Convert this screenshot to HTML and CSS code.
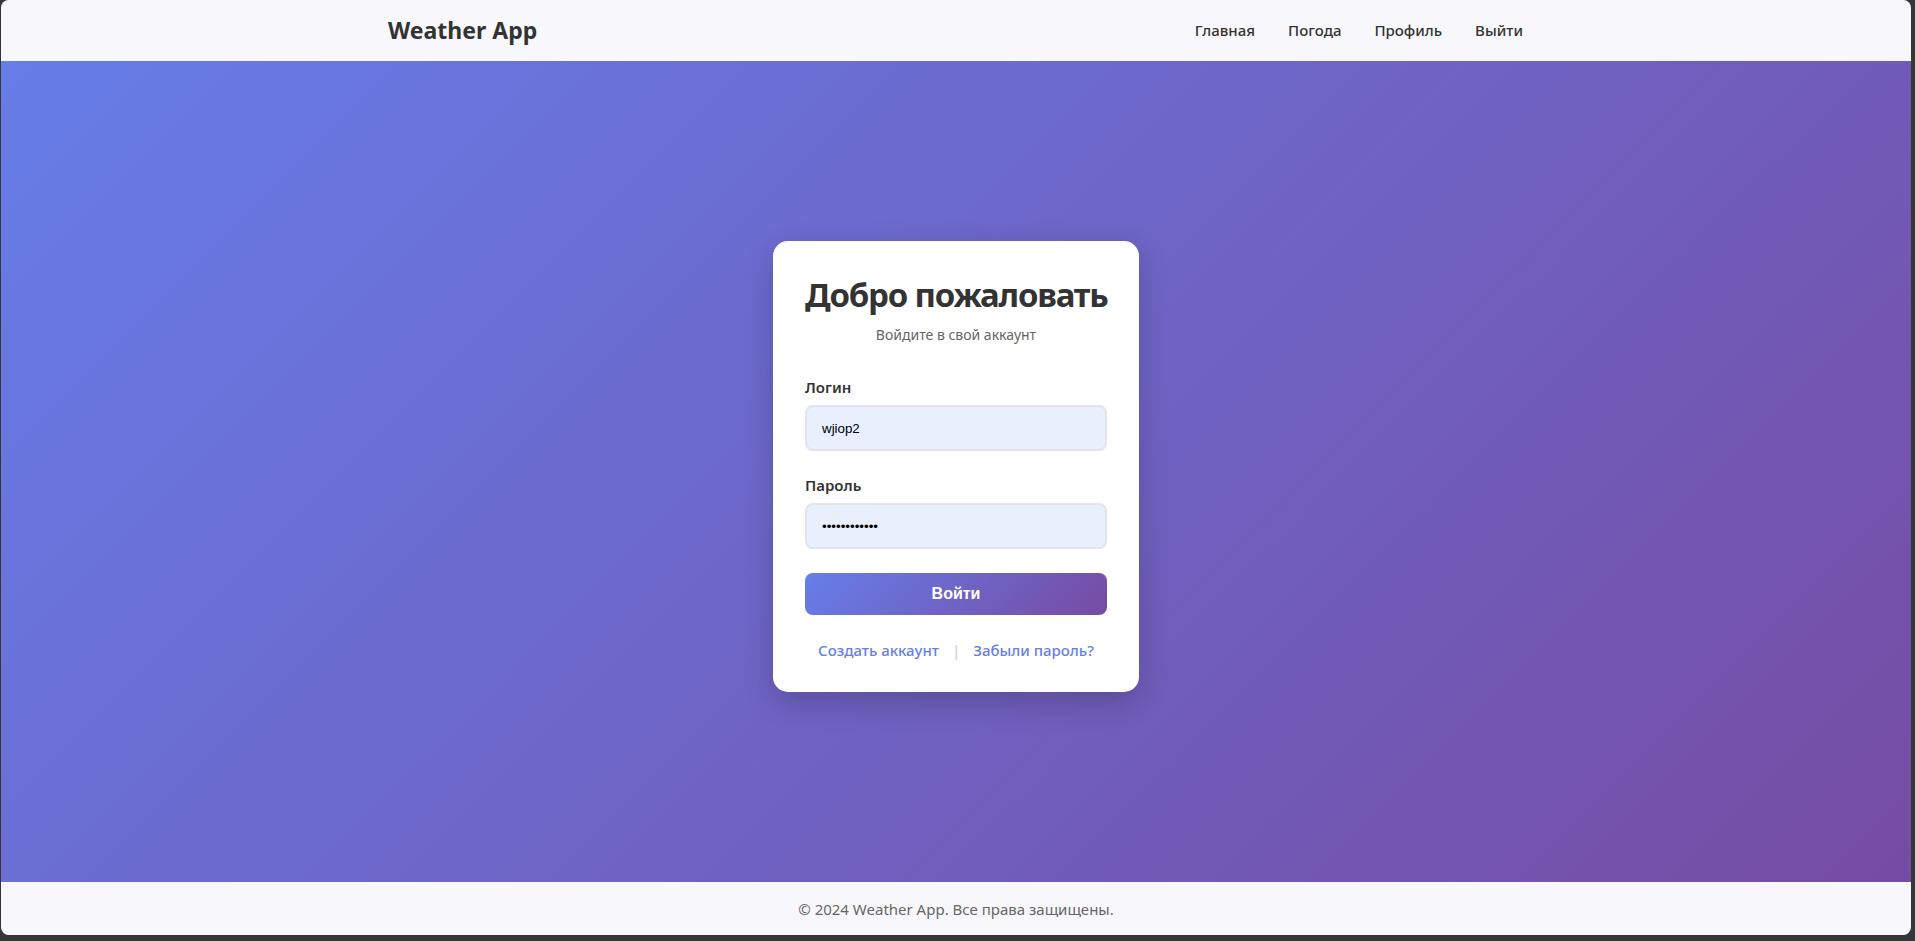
FILE: index.html
```html
<!DOCTYPE html>
<html lang="ru">
<head>
<meta charset="utf-8">
<title>Weather App — Вход</title>
<link rel="stylesheet" href="styles.css">
</head>
<body>
<div class="window">
  <header class="site-header">
    <div class="container header-inner">
      <a class="logo" href="#">Weather App</a>
      <nav class="nav">
        <a href="#">Главная</a>
        <a href="#">Погода</a>
        <a href="#">Профиль</a>
        <a href="#">Выйти</a>
      </nav>
    </div>
  </header>
  <main class="main">
    <div class="card">
      <h1 class="card-title">Добро пожаловать</h1>
      <p class="card-subtitle">Войдите в свой аккаунт</p>
      <form class="form">
        <div class="form-group">
          <label class="form-label" for="login">Логин</label>
          <input class="form-input" id="login" type="text" value="wjiop2">
        </div>
        <div class="form-group">
          <label class="form-label" for="password">Пароль</label>
          <input class="form-input" id="password" type="password" value="abcdefghijkl">
        </div>
        <button class="btn" type="button">Войти</button>
      </form>
      <div class="links">
        <a href="#">Создать аккаунт</a>
        <span class="sep">|</span>
        <a href="#">Забыли пароль?</a>
      </div>
    </div>
  </main>
  <footer class="site-footer">
    <p>© 2024 Weather App. Все права защищены.</p>
  </footer>
</div>
</body>
</html>
```

FILE: styles.css
```css
* { box-sizing: border-box; }

html, body {
  margin: 0;
  padding: 0;
  height: 100%;
}

body {
  background: #363636;
  font-family: "Noto Sans", "Open Sans", sans-serif;
  color: #333;
}

.window {
  height: 935px;
  margin: 0 4px 0 1px;
  border-radius: 8px;
  overflow: hidden;
  display: flex;
  flex-direction: column;
  background: linear-gradient(135deg, #667eea 0%, #764ba2 100%);
}

.site-header {
  height: 61px;
  flex: 0 0 61px;
  background: #f8f8fc;
  display: flex;
  align-items: center;
  padding-bottom: 2px;
}

.container {
  width: 100%;
  max-width: 1200px;
  margin: 0 auto;
  padding: 0 32px;
}

.header-inner {
  display: flex;
  align-items: center;
  justify-content: space-between;
}

.logo {
  font-size: 23px;
  font-weight: 700;
  color: #333;
  text-decoration: none;
  line-height: 30px;
}

.nav {
  display: flex;
  gap: 33px;
  padding-right: 1px;
}

.nav a {
  font-size: 15px;
  font-weight: 500;
  color: #333;
  text-decoration: none;
  line-height: 20px;
}

.main {
  flex: 1;
  display: flex;
  align-items: center;
  justify-content: center;
  padding-bottom: 10px;
}

.card {
  width: 366px;
  background: #fff;
  border-radius: 15px;
  padding: 32px;
  box-shadow: 0 10px 30px rgba(0, 0, 0, 0.2);
}

.card-title {
  margin: 0;
  font-size: 33px;
  letter-spacing: -1.2px;
  line-height: 44px;
  font-weight: 700;
  color: #333;
  text-align: center;
  white-space: nowrap;
}

.card-subtitle {
  margin: 8px 0 0;
  font-size: 14px;
  line-height: 20px;
  color: #666;
  text-align: center;
}

.form {
  margin-top: 32px;
}

.form-group {
  margin-bottom: 24px;
}

.form-label {
  display: block;
  font-size: 15px;
  line-height: 20px;
  font-weight: 600;
  color: #333;
  margin-bottom: 8px;
}

.form-input {
  display: block;
  width: 100%;
  height: 46px;
  padding: 0 15px;
  border: 2px solid #e1e5ea;
  border-radius: 8px;
  background: #e8f0fe;
  font-family: "Liberation Sans", Arial, sans-serif;
  font-size: 13.333px;
  color: #000;
  outline: none;
}

.btn {
  display: block;
  width: 100%;
  height: 42px;
  margin-top: 1px;
  border: none;
  border-radius: 8px;
  background: linear-gradient(135deg, #667eea 0%, #764ba2 100%);
  color: #fff;
  font-family: "Liberation Sans", Arial, sans-serif;
  font-size: 16px;
  font-weight: 700;
  cursor: pointer;
}

.links {
  margin-top: 25px;
  display: flex;
  justify-content: center;
  align-items: center;
  font-size: 15px;
  line-height: 20px;
}

.links a {
  color: #667eea;
  text-decoration: none;
  font-weight: 500;
}

.sep {
  color: #c8c8d8;
  margin: 0 13px;
}

.site-footer {
  height: 53px;
  flex: 0 0 53px;
  background: #f8f8fc;
  display: flex;
  align-items: center;
  justify-content: center;
}

.site-footer p {
  margin: 0;
  font-size: 15px;
  line-height: 20px;
  color: #666;
}
```
